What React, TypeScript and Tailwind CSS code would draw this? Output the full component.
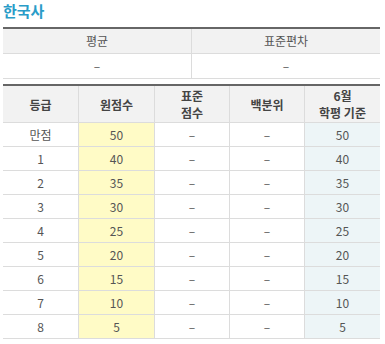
import React from "react";

const rows: [string, string, string][] = [
  ["만점", "50", "50"],
  ["1", "40", "40"],
  ["2", "35", "35"],
  ["3", "30", "30"],
  ["4", "25", "25"],
  ["5", "20", "20"],
  ["6", "15", "15"],
  ["7", "10", "10"],
  ["8", "5", "5"],
];

export default function App() {
  return (
    <div
      className="w-[385px] h-[344px] bg-white pl-[3px] pr-[5px] text-[12px] text-[#555]"
      style={{ fontFamily: '"Noto Sans CJK KR", "Noto Sans", sans-serif' }}
    >
      <div className="h-[27px] pt-[1px] text-[15px] font-bold leading-[20px] text-[#2a9cc8]">한국사</div>
      <div className="border-t-2 border-[#666]">
        <div className="grid grid-cols-[189px_188px]">
          <div className="h-[25px] bg-[#f2f2f2] border-b border-r border-[#dcdcdc] flex items-center justify-center">평균</div>
          <div className="h-[25px] bg-[#f2f2f2] border-b border-[#dcdcdc] flex items-center justify-center">표준편차</div>
          <div className="h-[25px] border-b border-r border-[#dcdcdc] flex items-center justify-center">–</div>
          <div className="h-[25px] border-b border-[#dcdcdc] flex items-center justify-center">–</div>
        </div>
      </div>
      <div className="mt-[5px] border-t-2 border-[#666]">
        <div className="grid grid-cols-[76px_76px_75px_75px_75px]">
          {["등급", "원점수", "표준\n점수", "백분위", "6월\n학평 기준"].map((h, i) => (
            <div
              key={i}
              className={`h-[37px] bg-[#f2f2f2] border-b border-[#dcdcdc] flex items-center justify-center text-center whitespace-pre-line font-bold text-[#444] leading-[17px] ${i < 4 ? "border-r" : ""}`}
            >
              {h}
            </div>
          ))}
          {rows.map(([g, raw, june]) => (
            <React.Fragment key={g}>
              <div className="h-[24px] border-b border-r border-[#dcdcdc] flex items-center justify-center">{g}</div>
              <div className="h-[24px] border-b border-r border-[#dcdcdc] bg-[#fffbc6] flex items-center justify-center">{raw}</div>
              <div className="h-[24px] border-b border-r border-[#dcdcdc] flex items-center justify-center">–</div>
              <div className="h-[24px] border-b border-r border-[#dcdcdc] flex items-center justify-center">–</div>
              <div className="h-[24px] border-b border-[#dcdcdc] bg-[#edf5f7] flex items-center justify-center">{june}</div>
            </React.Fragment>
          ))}
        </div>
      </div>
    </div>
  );
}
